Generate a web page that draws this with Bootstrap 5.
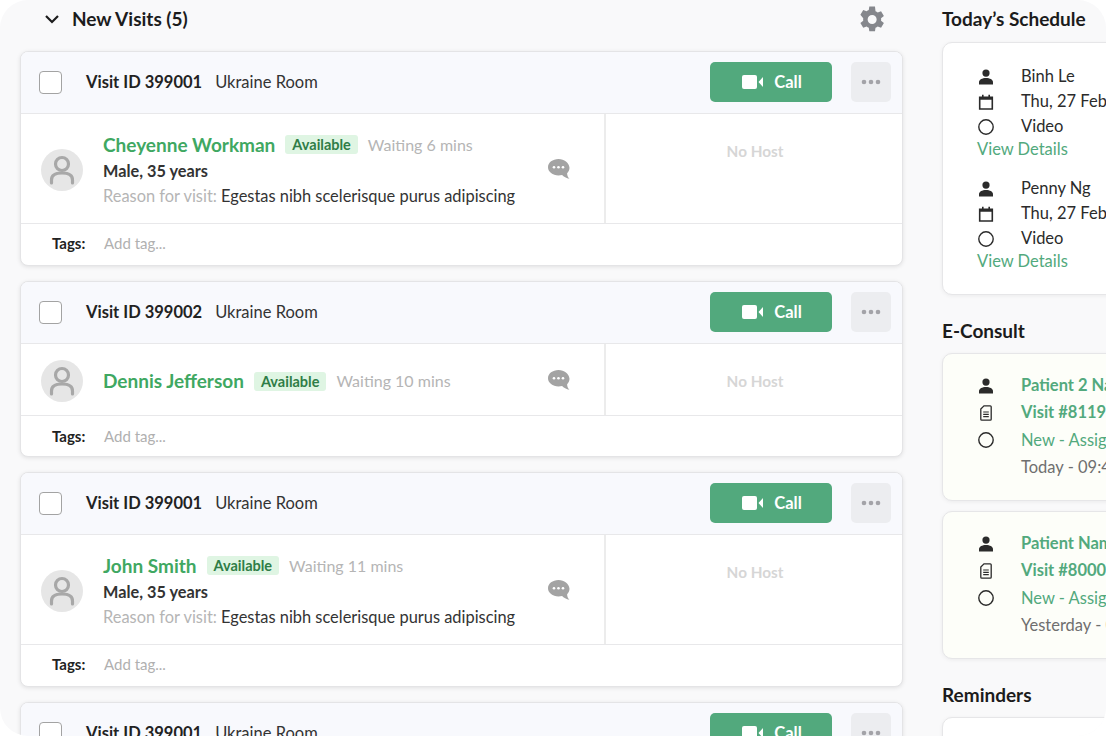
<!DOCTYPE html>
<html lang="en">
<head>
  <meta charset="UTF-8">
  <meta name="viewport" content="width=device-width, initial-scale=1.0">
  <title>Visits</title>
  <link href="https://cdn.jsdelivr.net/npm/bootstrap@5.3.2/dist/css/bootstrap.min.css" rel="stylesheet">
  <style>
    html, body { height: 736px; overflow: hidden; background: #fff; }
    body { font-family: Lato, "Liberation Sans", sans-serif; color: #2b2b2b; font-size: 16.5px; }
    .frame { width: 1106px; height: 736px; overflow: hidden; background: #f9f9fa; border-radius: 28px; }
    .visits-col { width: 903px; padding-left: 20px; flex: none; }
    .side-col { width: 230px; margin-left: 39px; flex: none; }
    .section-head { height: 38px; padding-left: 24px; padding-right: 16px; flex: none; margin-bottom: 13px; }
    .section-title { font-size: 19px; font-weight: 700; color: #1c1c1c; margin: 0; }
    .visit-card { border: 1px solid #e4e4e6; border-radius: 8px; box-shadow: 0 1px 4px rgba(0,0,0,.1); margin-bottom: 15px; overflow: hidden; --bs-card-bg: #fff; }
    .visit-top { background: #f8f9fd; height: 62px; padding: 0 11px 1px 18px; border-bottom: 1px solid #e8e8ea; }
    .check-box { width: 23px; height: 23px; border: 1.5px solid #a3a3a3; border-radius: 4px; background: #fff; flex: none; }
    .visit-id { font-weight: 700; margin-left: 24px; color: #222; }
    .visit-room { margin-left: 13px; color: #333; }
    .btn-call { width: 122px; height: 40px; background: #52a97d; border-radius: 5px; color: #fff; font-weight: 700; border: 0; font-size: 16.5px; gap: 10px; }
    .btn-call svg { margin-left: 2px; }
    .btn-more { width: 40px; height: 40px; background: #ecedf0; border-radius: 5px; border: 0; margin-left: 19px; }
    .patient-cell { width: 585px; padding: 3px 34px 0 20px; border-right: 2px solid #ececec; flex: none; }
    .body-tall { height: 109px; }
    .body-short { height: 71px; }
    .avatar-disc { width: 42px; height: 42px; border-radius: 50%; background: #e6e6e6; margin-right: 20px; flex: none; }
    .patient-name { font-size: 19px; font-weight: 700; color: #3fa862; line-height: 24px; margin-right: 10px; }
    .avail-tag { background: #dff5e3; color: #2f7d47; font-size: 14.5px; font-weight: 700; border-radius: 3px; padding: 0 7px; line-height: 19px; margin-right: 10px; }
    .wait-text { color: #b5b5b5; font-size: 16px; }
    .patient-sub { font-weight: 700; color: #333; line-height: 24px; font-size: 16.3px; margin-top: 2px; }
    .reason-line { line-height: 25px; color: #333; font-size: 16.4px; }
    .reason-line span { color: #b5b5b5; }
    .chat-icon { margin-bottom: 2px; flex: none; }
    .host-cell { color: #d6d6d6; font-size: 15.3px; font-weight: 700; padding: 27px 0 0 2px; text-align: center; line-height: 20px; }
    .tag-row { height: 42px; border-top: 1px solid #e8e8ea; padding: 0 0 2px 31px; }
    .body-short + .tag-row { height: 41px; padding-bottom: 0; }
    .tag-label { font-size: 15px; font-weight: 700; color: #222; width: 52px; }
    .tag-add { font-size: 15px; color: #b0b0b0; }
    .side-head { font-size: 19px; font-weight: 700; color: #1c1c1c; line-height: 22px; margin: 0 0 11px; }
    .schedule-title { margin-top: 8px; margin-bottom: 12px; }
    .reminder-title { margin-top: 25px; margin-bottom: 11px; }
    .side-card { border: 1px solid #e6e6e8; border-radius: 10px; box-shadow: 0 1px 4px rgba(0,0,0,.06); }
    .schedule-card { height: 253px; padding: 21px 0 0 34px; margin-bottom: 25px; background: #fff; }
    .consult-card { height: 148px; background: #fdfef9; padding: 18px 0 0 34px; margin-bottom: 10px; }
    .info-line { height: 25px; line-height: 25px; white-space: nowrap; }
    .consult-line { height: 27.3px; line-height: 27.3px; white-space: nowrap; }
    .line-icon { width: 44px; flex: none; color: #2b2b2b; }
    .green-strong { color: #52a97d; font-weight: 700; }
    .green-soft { color: #52a97d; }
    .grey-soft { color: #6f6f6f; }
    .view-link { display: block; color: #52a97d; line-height: 20px; height: 22px; text-decoration: none; }
    .sched-gap { margin-top: 15px; }
    .reminder-card { height: 60px; background: #fff; }
  </style>
</head>
<body>
  <svg width="0" height="0" class="d-block">
    <defs>
      <symbol id="ic-person" viewBox="0 0 16 16"><circle cx="8" cy="4.1" r="3.6" fill="currentColor"/><path d="M1 15.6v-2.4C1 10.6 4.2 9 8 9s7 1.6 7 4.2v2.4z" fill="currentColor"/></symbol>
      <symbol id="ic-cal" viewBox="0 0 16 16"><path d="M1.7 3.4h12.6v11.6H1.7z" fill="none" stroke="currentColor" stroke-width="1.6"/><path d="M1.7 3.4h12.6v2.4H1.7zM4 .8h1.6v2.6H4zM10.4.8H12v2.6h-1.6z" fill="currentColor"/></symbol>
      <symbol id="ic-ring" viewBox="0 0 16 16"><circle cx="8" cy="8" r="7.2" fill="none" stroke="currentColor" stroke-width="1.4"/></symbol>
      <symbol id="ic-doc" viewBox="0 0 12 16"><path d="M4 .8h6.2c.6 0 1 .4 1 1v12.4c0 .6-.4 1-1 1H1.8c-.6 0-1-.4-1-1V4z" fill="none" stroke="currentColor" stroke-width="1.3"/><path d="M3.2 7h5.6M3.2 9.3h5.6M3.2 11.6h5.6" stroke="currentColor" stroke-width="1.2"/></symbol>
    </defs>
  </svg>

  <div class="frame d-flex">
    <!-- Visits column -->
    <div class="visits-col d-flex flex-column">
      <div class="section-head d-flex align-items-center justify-content-between">
        <div class="d-flex align-items-center gap-2">
          <svg width="16" height="10" viewBox="0 0 16 10" class="me-1"><path d="M2 2l6 6 6-6" fill="none" stroke="#1c1c1c" stroke-width="2.2"/></svg>
          <h2 class="section-title">New Visits (5)</h2>
        </div>
        <svg width="31" height="31" viewBox="0 0 24 24"><path fill="#85878c" fill-rule="evenodd" d="M19.4 13a7.5 7.5 0 0 0 0-2l2.2-1.7-2.2-3.7-2.6 1a7.5 7.5 0 0 0-1.7-1L14.7 2h-4.4l-.4 2.6a7.5 7.5 0 0 0-1.7 1l-2.6-1-2.2 3.7L5.6 11a7.5 7.5 0 0 0 0 2l-2.2 1.7 2.2 3.7 2.6-1a7.5 7.5 0 0 0 1.7 1l.4 2.6h4.4l.4-2.6a7.5 7.5 0 0 0 1.7-1l2.6 1 2.2-3.7zM12.5 15.5a3.5 3.5 0 1 1 0-7 3.5 3.5 0 0 1 0 7z"/></svg>
      </div>
      <div id="visitList"></div>
    </div>

    <!-- Side column -->
    <div class="side-col">
      <h2 class="side-head schedule-title">Today’s Schedule</h2>
      <div class="card side-card schedule-card">
        <div id="schedule"></div>
      </div>
      <h2 class="side-head">E-Consult</h2>
      <div id="consults"></div>
      <h2 class="side-head reminder-title">Reminders</h2>
      <div class="card side-card reminder-card"></div>
    </div>
  </div>

  <script>
    const visits = [
      { id: '399001', name: 'Cheyenne Workman', wait: 'Waiting 6 mins', full: true },
      { id: '399002', name: 'Dennis Jefferson', wait: 'Waiting 10 mins', full: false },
      { id: '399001', name: 'John Smith', wait: 'Waiting 11 mins', full: true },
      { id: '399001', name: 'Sarah Lee', wait: 'Waiting 12 mins', full: true }
    ];

    const avatar = `<svg width="26" height="30" viewBox="0 0 26 30"><circle cx="13" cy="9" r="6.5" fill="none" stroke="#a8a8a8" stroke-width="3.2"/><path d="M2.5 28v-3c0-4.5 4-7 10.5-7s10.5 2.5 10.5 7v3" fill="none" stroke="#a8a8a8" stroke-width="3.2" stroke-linecap="round"/></svg>`;
    const chat = `<svg width="22" height="20" viewBox="0 0 22 20" class="chat-icon"><path d="M10.5 0C4.7 0 0 3.6 0 8.2c0 4.5 4.7 8.2 10.5 8.2 1.3 0 2.5-.2 3.6-.5 1.5 1.7 4.3 3.3 7.4 3.8-1.5-1.3-2.3-3.2-2.4-5.5 1.5-1.5 2.4-3.5 2.4-5.5C21 3.6 16.3 0 10.5 0z" fill="#a3a3a3"/><circle cx="6" cy="8.2" r="1.3" fill="#fff"/><circle cx="10.5" cy="8.2" r="1.3" fill="#fff"/><circle cx="15" cy="8.2" r="1.3" fill="#fff"/></svg>`;

    document.getElementById('visitList').innerHTML = visits.map(v => `
      <div class="card visit-card">
        <div class="visit-top d-flex align-items-center">
          <div class="check-box"></div>
          <span class="visit-id">Visit ID ${v.id}</span>
          <span class="visit-room">Ukraine Room</span>
          <button class="btn btn-call ms-auto d-flex align-items-center justify-content-center p-0">
            <svg width="22" height="14" viewBox="0 0 22 14"><rect width="15" height="14" rx="2" fill="#fff"/><path d="M16.5 7l4.5-5v10z" fill="#fff"/></svg>
            <span>Call</span>
          </button>
          <button class="btn btn-more d-flex align-items-center justify-content-center p-0">
            <svg width="20" height="6" viewBox="0 0 20 6"><circle cx="3" cy="3" r="2.3" fill="#a3a3a8"/><circle cx="10" cy="3" r="2.3" fill="#a3a3a8"/><circle cx="17" cy="3" r="2.3" fill="#a3a3a8"/></svg>
          </button>
        </div>
        <div class="d-flex ${v.full ? 'body-tall' : 'body-short'}">
          <div class="patient-cell d-flex align-items-center">
            <div class="avatar-disc d-flex align-items-center justify-content-center">${avatar}</div>
            <div class="flex-grow-1">
              <div class="d-flex align-items-center">
                <span class="patient-name">${v.name}</span>
                <span class="avail-tag">Available</span>
                <span class="wait-text">${v.wait}</span>
              </div>
              ${v.full ? `<div class="patient-sub">Male, 35 years</div>
              <div class="reason-line"><span>Reason for visit:</span> Egestas nibh scelerisque purus adipiscing</div>` : ''}
            </div>
            ${chat}
          </div>
          <div class="host-cell flex-grow-1">No Host</div>
        </div>
        <div class="tag-row d-flex align-items-center">
          <span class="tag-label">Tags:</span>
          <span class="tag-add">Add tag...</span>
        </div>
      </div>`).join('');

    const icon = (id, w, h) => `<span class="line-icon d-flex align-items-center"><svg width="${w}" height="${h}" style="margin-left:${(18 - w) / 2}px"><use href="#${id}"/></svg></span>`;

    document.getElementById('schedule').innerHTML = ['Binh Le', 'Penny Ng'].map((n, i) => `
      <div class="${i ? 'sched-gap' : ''}">
        <div class="info-line d-flex">${icon('ic-person', 16, 16)}<span>${n}</span></div>
        <div class="info-line d-flex">${icon('ic-cal', 16, 16)}<span>Thu, 27 Feb 2020</span></div>
        <div class="info-line d-flex">${icon('ic-ring', 16, 16)}<span>Video</span></div>
        <a class="view-link" href="#">View Details</a>
      </div>`).join('');

    document.getElementById('consults').innerHTML = [
      ['Patient 2 Name', 'Visit #81191', 'Today - 09:45 AM'],
      ['Patient Name', 'Visit #80001', 'Yesterday - 09:45 AM']
    ].map(c => `
      <div class="card side-card consult-card">
        <div class="consult-line d-flex">${icon('ic-person', 16, 16)}<span class="green-strong">${c[0]}</span></div>
        <div class="consult-line d-flex">${icon('ic-doc', 12, 16)}<span class="green-strong">${c[1]}</span></div>
        <div class="consult-line d-flex">${icon('ic-ring', 16, 16)}<span class="green-soft">New - Assigned</span></div>
        <div class="consult-line d-flex"><span class="line-icon"></span><span class="grey-soft">${c[2]}</span></div>
      </div>`).join('');
  </script>
  <script src="https://cdn.jsdelivr.net/npm/bootstrap@5.3.2/dist/js/bootstrap.bundle.min.js"></script>
</body>
</html>
